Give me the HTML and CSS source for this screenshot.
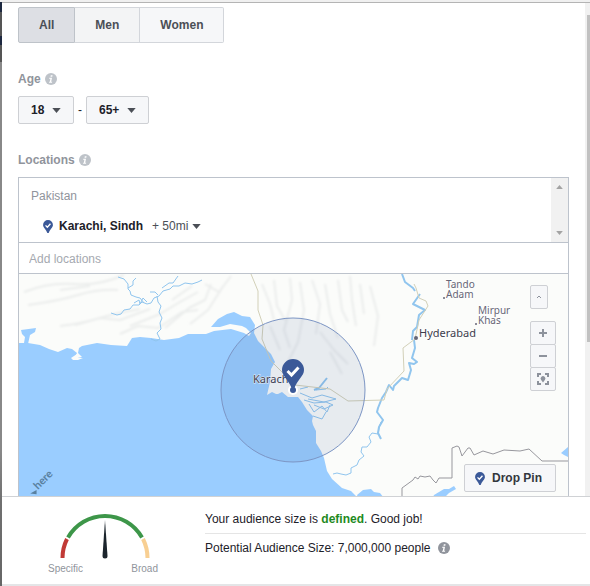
FILE: index.html
```html
<!DOCTYPE html>
<html lang="en">
<head>
	<meta charset="UTF-8">
	<meta name="viewport" content="width=device-width, initial-scale=1">
	<title>Edit Audience</title>
	<link rel="stylesheet" href="styles.css">
</head>
<body>
	<!-- shared icons -->
	<svg class="sprite" aria-hidden="true">
		<symbol id="info" viewBox="0 0 12 12">
			<circle cx="6" cy="6" r="6" fill="currentColor"/>
			<path d="M5.8 2.2h1.8l-.3 1.6H5.5zM4.3 4.8h2.7L6.2 8.8h1l-.2 1H4l.2-1h.6l.6-3H4.1z" fill="#fff"/>
		</symbol>
		<symbol id="pin" viewBox="0 0 22 29">
			<path d="M11 0a11 11 0 0 1 11 11c0 6-6.500 9.500-9.500 18h-3C6.500 20.500 0 17 0 11A11 11 0 0 1 11 0z" fill="#3b5998"/>
			<path d="M5.500 12l4 4 7-7.500" fill="none" stroke="#fff" stroke-width="3"/>
		</symbol>
		<symbol id="caret" viewBox="0 0 10 6">
			<path d="M0 0h10L5 6z" fill="currentColor"/>
		</symbol>
	</svg>

	<div class="page">
		<div class="backdrop"></div>
		<div class="dialog">
			<div class="main">
				<form class="form">
					<div class="genders" role="group" aria-label="Gender">
						<button type="button" class="gender active" aria-pressed="true">All</button>
						<button type="button" class="gender men" aria-pressed="false">Men</button>
						<button type="button" class="gender women" aria-pressed="false">Women</button>
					</div>

					<div class="title"><label for="ageMin">Age</label><svg class="info"><use href="#info"/></svg></div>
					<div class="ages">
						<div class="dropdown">
							<select id="ageMin"><option>18</option></select>
							<svg class="caret"><use href="#caret"/></svg>
						</div>
						<span class="dash">-</span>
						<div class="dropdown">
							<select id="ageMax" aria-label="Maximum age"><option>65+</option></select>
							<svg class="caret"><use href="#caret"/></svg>
						</div>
					</div>

					<div class="title"><label for="addLocation">Locations</label><svg class="info"><use href="#info"/></svg></div>
					<div class="locations">
						<div class="list">
							<div class="places">
								<div class="country">Pakistan</div>
								<div class="place">
									<svg class="smallPin"><use href="#pin"/></svg>
									<strong>Karachi, Sindh</strong>
									<div class="radius">
										<select aria-label="Radius"><option>+ 50mi</option></select>
										<svg class="caret"><use href="#caret"/></svg>
									</div>
								</div>
							</div>
							<div class="listScroll">
								<svg class="arrow up"><use href="#caret"/></svg>
								<svg class="arrow"><use href="#caret"/></svg>
							</div>
						</div>
						<input id="addLocation" class="addLocation" type="text" placeholder="Add locations">

						<div class="map">
							<svg class="mapCanvas" viewBox="19 274 549 222" preserveAspectRatio="xMidYMid slice">
								<defs>
									<filter id="soft"><feGaussianBlur stdDeviation="1.2"/></filter>
								</defs>
								<rect x="-500" y="0" width="2000" height="900" fill="#fbfcfa"/>
								<!-- hills -->
								<g class="relief" filter="url(#soft)">
									<path d="M24 292q25-10 50-8t50-9M28 305q30-4 50-10t40-5M60 326q20-2 40-8t40-9M75 325l25-7 20 2 30-11M60 290l30-4M130 326l30-12 20-12 18-10M120 334l18-8 20 2 24-16 16-2M165 328l24-20 16-8 6-16M190 324l18-14 14-22M205 284l14 8 12-16M172 300l20-14"/>
									<path d="M262 284l8 20 4 16M274 280l3 26 8 14M290 278l2 22-8 30 6 18M300 282l4 28-6 32-10 20M312 280l8 24-4 30M325 284l5 30 8 24M338 280l4 30 6 12M350 276l2 24 4 26M360 284l4 30M370 286l8 30-4 30M320 332l14 18 14 14M270 326l10 24M330 352l12 22"/>
								</g>
								<!-- sea -->
								<path class="water" d="M-480 343H28l12 2 9 4 9 3 9-4 5 1 5 4-2 4-2 2 9-2-4-4 1-5 3-2 15-3 14 2 16 1 5-8 8-1 11 1 13 2 15-2 9-4h18l8-3 17-2 13 4 5 3 2-3-5-5-4-2-12-2-10 3-9 0 7-8 9-5 7-2 8 4 8 1 5 8-1 8 4 8 6 6 7 7 4 8-4 7-1 13-3 13 5-3 4 2 2 0 4-2 6 5h10l4 5 5 8 6 6-1 5 1 4 3 6v12l5 8 3 7 3 13 5 8 10 9 9 3 5 5v20H-480z"/>
								<path class="water" d="M21 330l15-2-1 4-5 3-2 9-4-1 1-6-3-3zM357 495l6-5 8-1 3 3 6 1 4 5h-26zM434 495l10-6 5 0 5-3 2 3-7 4-4 4h-12zM561 453l7-6v10l-4-2z"/>
								<!-- islands and creeks of the delta -->
								<path class="land" d="M71 358l6-4 1 4 5 0-5 2-5 0z"/>
								<path class="creek" d="M300 393l12 5 10-3 14 4-12 3-16-3M304 400l10 3 12-1 7 3-9 4-10-4M309 404l5 8 8-6 5 6 3-7M313 416l9 3 4-7M316 390l10-1 2-2M300 389l8-2"/>
								<path class="creek lagoon" d="M314 390l5-2 8-10"/>
								<!-- rivers -->
								<path class="river" d="M118 277l6 2 4 5 0 5 2 2 1 4 5 2 4 1 4 5M136 278l-3 3 0 4-5 3M111 313l6 2 4-1 3-4 6-1 3-4 6 0 3-3 5 2 4-1 3-5 5-2 4-5 7-2 3-3 6 0 6-3 7 1 6-2 4-2M162 288l7-5 4 0 5-7M158 295l-3-3-5 0M157 296l1 6 3 4-2 6 3 6-2 5 1 6-4 4 3 6-4 2-5-2M140 304l3-6 4 4M134 303l5-3 1 4"/>
								<path class="river indus" d="M402 274l3 8 8 6 2 3M420 294l-7 10 8 4 4 2-6 5-2 12-4 4-1 9M414 340l1 8-3 10 5 4-3 2-5-1 2 7-3 10-6-2-8 8-1 4-4-5-3 7-4 6-4 10-1 4 6 8-4 7-1 6 3 6"/>
								<path class="river" d="M381 422l-2 6-1 6-6-1-3 4 2 5-4 5-5 0-1 5 3 4-5 4-2 5-6 3 0 5-5 2-5-1-4-1-4 1"/>
								<!-- roads -->
								<path class="road" d="M251 274l7 17v19l5 15-1 14 9 22 15 15 9 9 35 4 18 12 36-1 3-11 17-18-1-23 12-9 4-19 9-14-2-5-7-3-3-10-2-4"/>
								<!-- border -->
								<path class="border" d="M402 498v-10l11-8 2-3 3 2 2-3 5 1 5-1 3 4 3 3 3-5h13v-30l5-2 2 1 3 9 6-8 2 0 4 7 9-4 10 3 11-4 16 1 9-2 13 12h500"/>

								<text class="city" x="419" y="337">Hyderabad</text>
								<text class="city" x="253" y="383">Karachi</text>
								<text class="town"><tspan x="446" y="288">Tando</tspan><tspan x="446" y="298">Adam</tspan></text>
								<text class="town"><tspan x="478" y="314">Mirpur</tspan><tspan x="478" y="324">Khas</tspan></text>
								<circle class="dot" cx="416" cy="338" r="2"/>
								<circle class="dot" cx="444" cy="298" r="1"/>
								<circle class="dot" cx="476" cy="324" r="1"/>

								<circle class="range" cx="293" cy="390" r="72"/>
								<circle cx="293" cy="390" r="5" fill="#fff"/>
								<circle cx="293" cy="390" r="3" fill="#3b5998"/>
								<use href="#pin" x="282" y="359" width="22" height="29"/>
								<g transform="translate(38 490) rotate(-45)">
									<path d="M-8-3l4 5 3-3z" fill="#59809f"/>
									<text class="here">here</text>
								</g>
							</svg>

							<div class="mapButtons">
								<button type="button" class="collapse" aria-label="Collapse map"><svg viewBox="0 0 6 4"><path d="M1 3l2-2 2 2"/></svg></button>
								<div class="zoom">
									<button type="button" aria-label="Zoom in"><svg viewBox="0 0 12 12"><path d="M2 6h8M6 2v8" stroke-width="2"/></svg></button>
									<button type="button" aria-label="Zoom out"><svg viewBox="0 0 12 12"><path d="M2 6h8" stroke-width="2"/></svg></button>
									<button type="button" aria-label="Center map"><svg viewBox="0 0 12 12"><path d="M1 4V1h3M8 1h3v3M11 8v3H8M4 11H1V8" stroke-width="2"/><path d="M6 9.500L4 6.800a2.400 2.400 0 1 1 4 0z" fill="#8d929c" stroke="none"/></svg></button>
								</div>
							</div>
							<button type="button" class="dropPin"><svg class="smallPin"><use href="#pin"/></svg>Drop Pin</button>
						</div>
					</div>
				</form>
				<div class="pageScroll"><div class="thumb"></div></div>
			</div>

			<div class="audience">
				<div class="gauge">
					<svg viewBox="0 0 90 46">
						<path d="M2.500 45A42.500 42.500 0 0 1 7 26" stroke="#c13a36"/>
						<path d="M8 24.500A42.500 42.500 0 0 1 82 24.500" stroke="#3d9649"/>
						<path d="M83 26A42.500 42.500 0 0 1 87.500 45" stroke="#f8cf92"/>
						<path d="M45 7l2.500 36a2.500 2.500 0 0 1-5 0z" fill="#1c252d"/>
					</svg>
					<div class="scale"><span>Specific</span><span>Broad</span></div>
				</div>
				<div class="summary">
					<p>Your audience size is <b>defined</b>. Good job!</p>
					<p>Potential Audience Size: 7,000,000 people <svg class="info"><use href="#info"/></svg></p>
				</div>
			</div>
		</div>
	</div>
</body>
</html>
```
FILE: styles.css
```css
*{
	box-sizing: border-box;
	margin: 0;
	padding: 0;
}
body{
	font-family: "Liberation Sans", Arial, sans-serif;
	font-size: 12px;
	color: #1d2129;
	background-color: #fff;
}
button,
input,
select{
	font: inherit;
	color: inherit;
}
button,
select{
	cursor: pointer;
}
svg{
	display: block;
}
.sprite{
	position: absolute;
	width: 0;
	height: 0;
}
.page{
	display: flex;
	height: 100vh;
	padding-top: 2px;
	background-color: #f0f0f0;
}
.backdrop{
	width: 2px;
	background: linear-gradient(#1d2840 10px, #555 10px, #555 34px, #1d2840 34px, #1d2840 43px, #555 43px, #555 60px, #888 60px, #888 450px, #707070 500px, #666);
}
.dialog{
	display: flex;
	flex-direction: column;
	flex: 1;
	min-width: 0;
	border-top: 1px solid #b4b4b4;
	background-color: #fff;
}
.main{
	display: flex;
	flex: 1;
	min-height: 0;
}
.form{
	display: flex;
	flex-direction: column;
	flex: 1;
	min-width: 0;
	padding: 4px 16px 0;
}
.pageScroll{
	width: 5px;
	padding: 12px 0 0 2px;
	background-color: #f1f1f1;
}
.pageScroll .thumb{
	height: 68%;
	background-color: #c1c1c1;
}

/* gender */
.genders{
	display: flex;
	height: 36px;
}
.gender{
	padding: 0 20px;
	border: 1px solid #d3d6db;
	border-left-width: 0;
	background-color: #f6f7f9;
	color: #4b4f56;
	font-weight: bold;
}
.gender.active{
	border: 1px solid #bec3c9;
	border-radius: 2px 0 0 2px;
	background-color: #dddfe4;
}
.gender.men{
	background-color: #f3f4f5;
}
.gender.women{
	border-radius: 0 2px 2px 0;
}

.title{
	display: flex;
	align-items: center;
	gap: 4px;
	height: 16px;
	margin: 28px 0 9px;
	color: #90949c;
	font-weight: bold;
}
.info{
	width: 12px;
	height: 12px;
	color: #bec3c9;
}
.caret{
	width: 9px;
	height: 5px;
	color: #4b4f56;
	pointer-events: none;
}

/* age */
.ages{
	display: flex;
	align-items: center;
	gap: 4px;
}
.dropdown{
	display: flex;
	align-items: center;
	height: 28px;
	padding-right: 12px;
	border: 1px solid #ced0d4;
	border-radius: 2px;
	background-color: #f6f7f9;
}
.dropdown select,
.radius select{
	appearance: none;
	border: 0;
	background: none;
}
.dropdown select{
	height: 26px;
	padding: 0 20px 0 12px;
	margin-right: -13px;
	font-weight: bold;
}

/* locations */
.locations{
	display: flex;
	flex-direction: column;
	flex: 1;
	min-height: 0;
	border: 1px solid #bdc3cc;
	border-bottom: 0;
}
.list{
	display: flex;
	height: 65px;
	border-bottom: 1px solid #bdc3cc;
}
.places{
	flex: 1;
	padding: 10px 12px 0;
}
.country{
	line-height: 16px;
	color: #90949c;
}
.place{
	display: flex;
	align-items: center;
	height: 16px;
	margin: 14px 0 0 12px;
}
.smallPin{
	width: 10px;
	height: 13px;
}
.place strong{
	margin: 0 9px 0 6px;
}
.radius{
	display: flex;
	align-items: center;
	color: #4b4f56;
}
.radius select{
	padding-right: 14px;
	margin-right: -11px;
}
.listScroll{
	display: flex;
	flex-direction: column;
	justify-content: space-between;
	align-items: center;
	width: 17px;
	padding: 7px 0;
	background-color: #f1f1f1;
}
.arrow{
	width: 7px;
	height: 4px;
	color: #a3a3a3;
}
.arrow.up{
	transform: rotate(180deg);
}
.addLocation{
	width: 100%;
	height: 31px;
	padding: 2px 10px 0;
	border: 0;
	border-bottom: 1px solid #bdc3cc;
}
.addLocation::placeholder{
	color: #a5a9b0;
}

/* map */
.map{
	position: relative;
	flex: 1;
	min-height: 0;
	overflow: hidden;
}
.mapCanvas{
	width: 100%;
	height: 100%;
}
.mapCanvas path{
	stroke-linejoin: round;
}
.relief{
	fill: none;
	stroke: #ebedec;
	stroke-width: 2;
}
.water{
	fill: #9acdff;
}
.land{
	fill: #fbfcfa;
}
.creek,
.river{
	fill: none;
	stroke: #90c5ee;
	stroke-width: 1;
}
.lagoon,
.indus{
	stroke-width: 2;
}
.road{
	fill: none;
	stroke: #d2d0b8;
}
.border{
	fill: none;
	stroke: #97979d;
}
.city,
.town{
	font-family: "Noto Sans", sans-serif;
	paint-order: stroke;
	stroke: #fff;
	stroke-width: 1px;
}
.city{
	font-size: 11px;
	fill: #3c3c4c;
}
.town{
	font-size: 10px;
	fill: #666676;
}
.dot{
	fill: #666676;
}
.range{
	fill: rgba(59, 89, 152, .1);
	stroke: #7c95c4;
}
.here{
	font-family: Lato, sans-serif;
	font-size: 11px;
	font-weight: bold;
	fill: #59809f;
}
.mapButtons{
	position: absolute;
	top: 11px;
	right: 12px;
	display: flex;
	flex-direction: column;
	gap: 12px;
}
.mapButtons button{
	display: flex;
	align-items: center;
	justify-content: center;
	width: 26px;
	height: 24px;
	border: 1px solid #ced0d4;
	border-radius: 2px;
	background-color: #f6f7f9;
}
.mapButtons svg{
	width: 12px;
	height: 12px;
	fill: none;
	stroke: #8d929c;
}
.mapButtons .collapse{
	width: 18px;
}
.mapButtons .collapse svg{
	width: 6px;
	height: 4px;
}
.zoom button + button{
	margin-top: -1px;
}
.dropPin{
	position: absolute;
	right: 12px;
	bottom: 4px;
	display: flex;
	align-items: center;
	gap: 7px;
	height: 28px;
	padding: 0 13px 0 10px;
	border: 1px solid #ced0d4;
	border-radius: 2px;
	background-color: #f6f7f9;
	color: #33373d;
	font-weight: bold;
}

/* audience size */
.audience{
	display: flex;
	gap: 47px;
	height: 90px;
	padding: 16px 4px 0 46px;
	border-top: 1px solid #d0d2d5;
	box-shadow: inset 0 -2px #e4e5e7;
}
.gauge{
	width: 110px;
}
.gauge svg{
	width: 90px;
	height: 46px;
	margin-left: 12px;
	fill: none;
	stroke-width: 4;
}
.scale{
	display: flex;
	justify-content: space-between;
	line-height: 12px;
	margin-top: 4px;
	font-size: 10px;
	color: #90949c;
}
.summary{
	flex: 1;
}
.summary p{
	display: flex;
	align-items: center;
	height: 20px;
	line-height: 20px;
	white-space: pre;
}
.summary p:first-child{
	align-items: flex-start;
	height: 21px;
	line-height: 12px;
	border-bottom: 1px solid #e5e5e5;
}
.summary p + p{
	margin-top: 4px;
}
.summary b{
	color: #1f8a22;
}
.summary .info{
	margin-left: 4px;
	color: #90949c;
}
```
